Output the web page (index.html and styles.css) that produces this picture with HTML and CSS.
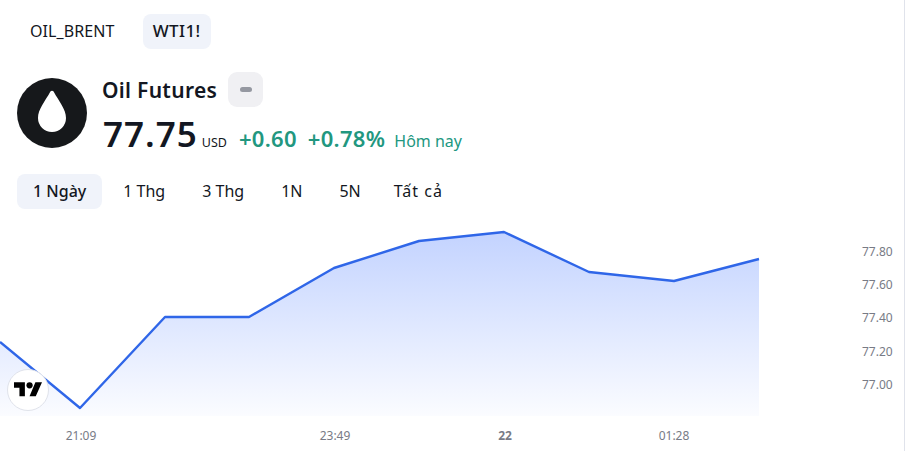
FILE: index.html
```html
<!DOCTYPE html>
<html lang="vi">
<head>
<meta charset="utf-8">
<title>Oil Futures</title>
<link rel="stylesheet" href="styles.css">
</head>
<body>
<main class="widget">
  <nav class="tabs">
    <span class="tab">OIL_BRENT</span>
    <span class="tab active">WTI1!</span>
  </nav>
  <header class="quote">
    <svg class="logo" viewBox="0 0 70 70" aria-hidden="true">
      <circle cx="35" cy="35" r="35" fill="#16181b"/>
      <path d="M33.4 13.6C28 23.5 21 31.500 21 40a14 14 0 0 0 28 0C49 31.500 42 23.500 36.600 13.600c-.7-1.300-2.500-1.300-3.200 0Z" fill="#fff"/>
    </svg>
    <div class="quote-body">
      <div class="title-row">
        <h1 class="title">Oil Futures</h1>
        <span class="status"><i class="dash"></i></span>
      </div>
      <div class="price-row">
        <span class="price">77.75</span>
        <span class="currency">USD</span>
        <span class="change">+0.60</span>
        <span class="change">+0.78%</span>
        <span class="today">Hôm nay</span>
      </div>
    </div>
  </header>
  <nav class="ranges">
    <span class="range active">1 Ngày</span>
    <span class="range">1 Thg</span>
    <span class="range">3 Thg</span>
    <span class="range">1N</span>
    <span class="range">5N</span>
    <span class="range range-all">Tất cả</span>
  </nav>
  <section class="chart">
    <svg class="plot" viewBox="0 0 907 451" aria-hidden="true">
      <defs><linearGradient id="area" x1="0" y1="232" x2="0" y2="416" gradientUnits="userSpaceOnUse"><stop offset="0" stop-color="#2962ff" stop-opacity=".28"/><stop offset="1" stop-color="#2962ff" stop-opacity=".02"/></linearGradient></defs>
      <path d="M0 342L80 408L165 317L249 317L334 268L419 241L504 232L589 272L674 281L759 259V416H0Z" fill="url(#area)"/>
      <path d="M0 342L80 408L165 317L249 317L334 268L419 241L504 232L589 272L674 281L759 259" fill="none" stroke="#2f66e8" stroke-width="2.4" stroke-linejoin="round"/>
    </svg>
    <span class="y" style="top:252px">77.80</span>
    <span class="y" style="top:285px">77.60</span>
    <span class="y" style="top:318px">77.40</span>
    <span class="y" style="top:352px">77.20</span>
    <span class="y" style="top:385px">77.00</span>
    <span class="x" style="left:81px">21:09</span>
    <span class="x" style="left:335px">23:49</span>
    <span class="x bold" style="left:505px">22</span>
    <span class="x" style="left:674px">01:28</span>
    <span class="badge">
      <svg viewBox="0 0 36 28" width="28" height="22" preserveAspectRatio="none" aria-hidden="true"><path d="M14 22H7V11H0V4h14v18ZM28 22h-8l7.500-18H36L28 22Z" fill="#000"/><circle cx="20" cy="8" r="4" fill="#000"/></svg>
    </span>
  </section>
</main>
</body>
</html>
```
FILE: styles.css
```css
* { box-sizing: border-box; }
html, body { margin: 0; height: 100%; background: #fff; }
body { overflow: hidden; font-family: "Noto Sans", "Liberation Sans", sans-serif; color: #131722; }
.widget { width: 905px; height: 451px; padding: 14px 17px 0; border-right: 1px solid #e0e3eb; }
.tabs { display: flex; gap: 18px; height: 35px; }
.tab { display: flex; align-items: center; padding: 0 10px 2px 13px; border-radius: 8px; font-size: 16px; letter-spacing: .1px; }
.tab.active { padding: 0 10px 2px; background: #f0f3fa; font-size: 17px; font-weight: 500; letter-spacing: .4px; }
.quote { display: flex; gap: 15px; margin-top: 23px; }
.logo { width: 70px; height: 70px; margin-top: 6px; flex: none; }
.title-row { display: flex; align-items: center; gap: 11px; height: 35px; }
.title { margin: 0; font-size: 21px; font-weight: 600; letter-spacing: .3px; }
.status { display: flex; align-items: center; justify-content: center; width: 35px; height: 35px; border-radius: 9px; background: #f0f0f3; }
.dash { width: 12px; height: 5px; border-radius: 3px; background: #9598a1; }
.price-row { display: flex; align-items: baseline; height: 44px; margin-top: 3px; padding-left: 1px; }
.price { font-size: 35px; font-weight: 600; letter-spacing: 1px; margin-right: 4px; }
.currency { font-size: 12.500px; margin-right: 12px; }
.change { font-size: 22px; font-weight: 600; letter-spacing: .3px; color: #22977f; margin-right: 11px; }
.today { font-size: 16px; color: #22977f; margin-left: -2px; }
.ranges { display: flex; gap: 5px; margin-top: 20px; }
.range { display: flex; align-items: center; height: 35px; padding: 0 16px 1px; border-radius: 8px; font-size: 16px; }
.range.active { background: #f0f3fa; font-weight: 500; }
.range-all { margin-left: -4px; letter-spacing: 1px; }
.chart { position: absolute; inset: 0; pointer-events: none; }
.plot { position: absolute; left: 0; top: 0; width: 907px; height: 451px; }
.y, .x { position: absolute; font-size: 12px; line-height: 16px; color: #787b86; }
.y { left: 862px; transform: translateY(-50%); }
.x { top: 428px; transform: translateX(-50%); }
.bold { font-weight: 700; }
.badge { position: absolute; left: 7px; top: 369px; width: 42px; height: 42px; display: flex; align-items: center; justify-content: center; background: #fff; border: 1px solid #e0e3eb; border-radius: 50%; }
```
